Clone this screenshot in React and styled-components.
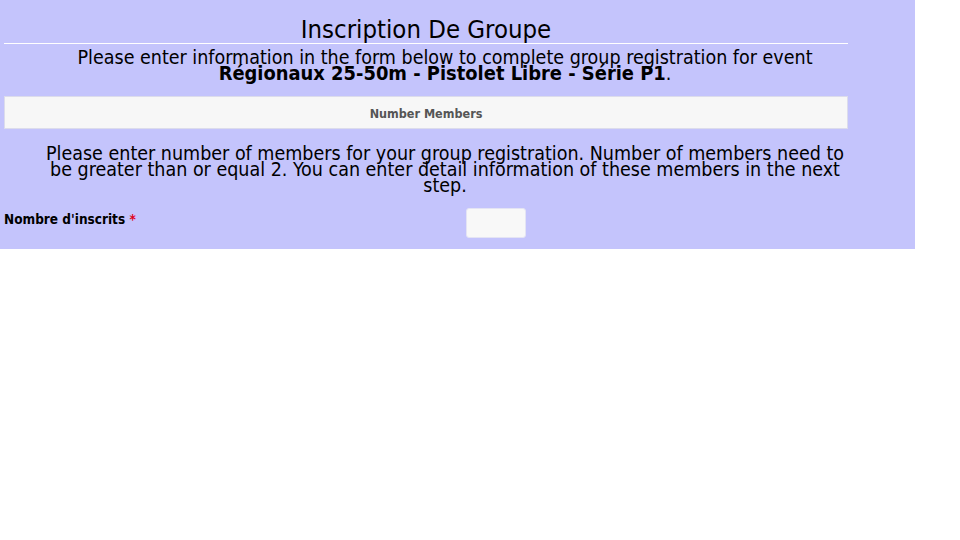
import React from "react";
import styled, { createGlobalStyle } from "styled-components";

const Global = createGlobalStyle`
  html, body { margin: 0; padding: 0; background: #ffffff; }
  body { font-family: "DejaVu Sans Condensed", "DejaVu Sans", Verdana, sans-serif; color: #000; }
`;

const Panel = styled.div`
  width: 915px;
  background: #c4c4fc;
  padding: 0 0 11px 0;
  box-sizing: border-box;
`;

const Inner = styled.div`
  width: 844px;
  margin-left: 4px;
`;

const Title = styled.h1`
  margin: 0;
  padding-top: 15px;
  font-size: 25.5px;
  font-weight: normal;
  line-height: 28px;
  text-align: center;
  border-bottom: 1px solid #ffffff;
`;

const Paragraph = styled.p`
  width: 816px;
  margin: ${(p) => p.$top}px 0 0 33px;
  font-size: 19.5px;
  line-height: 16px;
  text-align: center;
`;

const Strong = styled.strong`
  font-weight: bold;
  font-size: 19.9px;
`;

const SectionBar = styled.div`
  margin-top: 14px;
  height: 33px;
  box-sizing: border-box;
  background: #f7f7f7;
  border: 1px solid #dcdcec;
  display: flex;
  align-items: center;
  justify-content: center;
  padding-top: 2px;
  font-size: 12.5px;
  font-weight: bold;
  color: #555555;
`;

const FieldRow = styled.div`
  display: grid;
  grid-template-columns: 462px 60px;
  align-items: center;
  margin-top: 14px;
`;

const Label = styled.label`
  font-size: 13.5px;
  font-weight: bold;
  color: #000;
  margin-bottom: 8px;
`;

const Required = styled.span`
  color: #e0001a;
`;

const NumberInput = styled.input`
  width: 60px;
  height: 30px;
  box-sizing: border-box;
  background: #f8f8f8;
  border: 1px solid #e4e4f4;
  border-radius: 3px;
  padding: 0 4px;
  font-size: 13px;
  outline: none;
`;

export default function App() {
  return (
    <>
      <Global />
      <Panel>
        <Inner>
          <Title>Inscription De Groupe</Title>
          <Paragraph $top={6}>
            Please enter information in the form below to complete group registration for event{" "}
            <Strong>Régionaux 25-50m - Pistolet Libre - Série P1</Strong>.
          </Paragraph>
          <SectionBar>Number Members</SectionBar>
          <Paragraph $top={17}>
            Please enter number of members for your group registration. Number of members need to be greater than or equal 2. You can enter detail information of these members in the next step.
          </Paragraph>
          <FieldRow>
            <Label>
              Nombre d'inscrits <Required>*</Required>
            </Label>
            <NumberInput type="text" />
          </FieldRow>
        </Inner>
      </Panel>
    </>
  );
}
